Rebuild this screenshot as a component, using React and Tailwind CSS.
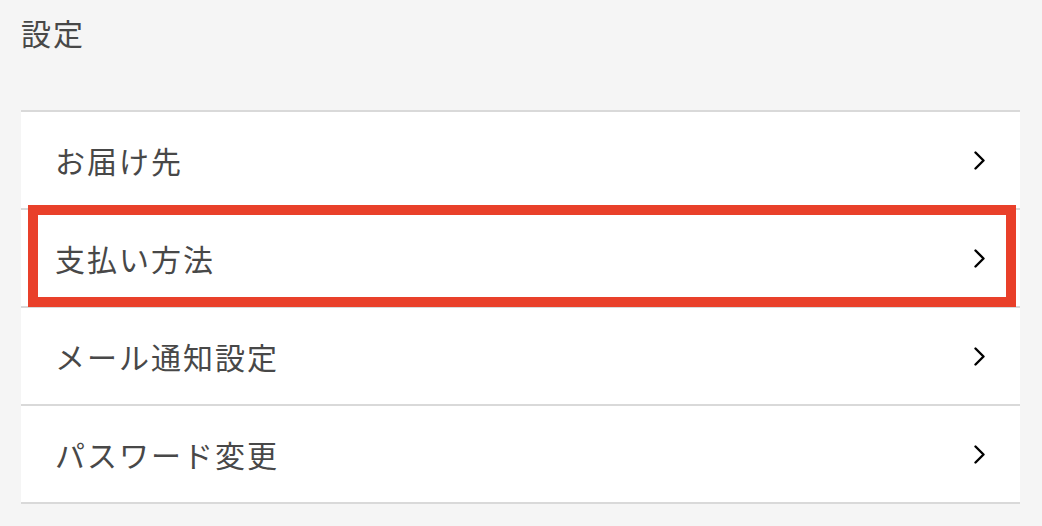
export default function App() {
  const items = ['お届け先', '支払い方法', 'メール通知設定', 'パスワード変更'];

  return (
    <div
      className="relative min-h-[526px] w-full bg-[#f5f5f5] pt-[10px]"
      style={{ fontFamily: '"Noto Sans CJK JP", "Noto Sans", sans-serif' }}
    >
      <h1 className="pl-[21px] text-[30px] leading-[45px] tracking-[2px] font-normal text-[#484848]">設定</h1>

      {/* Settings list */}
      <ul className="mt-[55px] ml-[21px] w-[999px] bg-white border-b-2 border-[#d9d9d9]">
        {items.map((label) => (
          <li
            key={label}
            className="flex h-[98px] items-center justify-between border-t-2 border-[#d9d9d9] pl-[34px] pr-[35px]"
          >
            <span className="text-[30px] tracking-[2px] text-[#484848]">{label}</span>
            <svg width="11" height="19" viewBox="0 0 11 19" fill="none">
              <polyline points="1.5,1.5 9.5,9.5 1.5,17.5" stroke="#000" strokeWidth="2.4" strokeLinecap="round" strokeLinejoin="round" />
            </svg>
          </li>
        ))}
      </ul>

      {/* Highlight annotation */}
      <div className="absolute left-[28px] top-[205px] h-[102px] w-[988px] border-[10px] border-[#e9402a]" />
    </div>
  );
}
